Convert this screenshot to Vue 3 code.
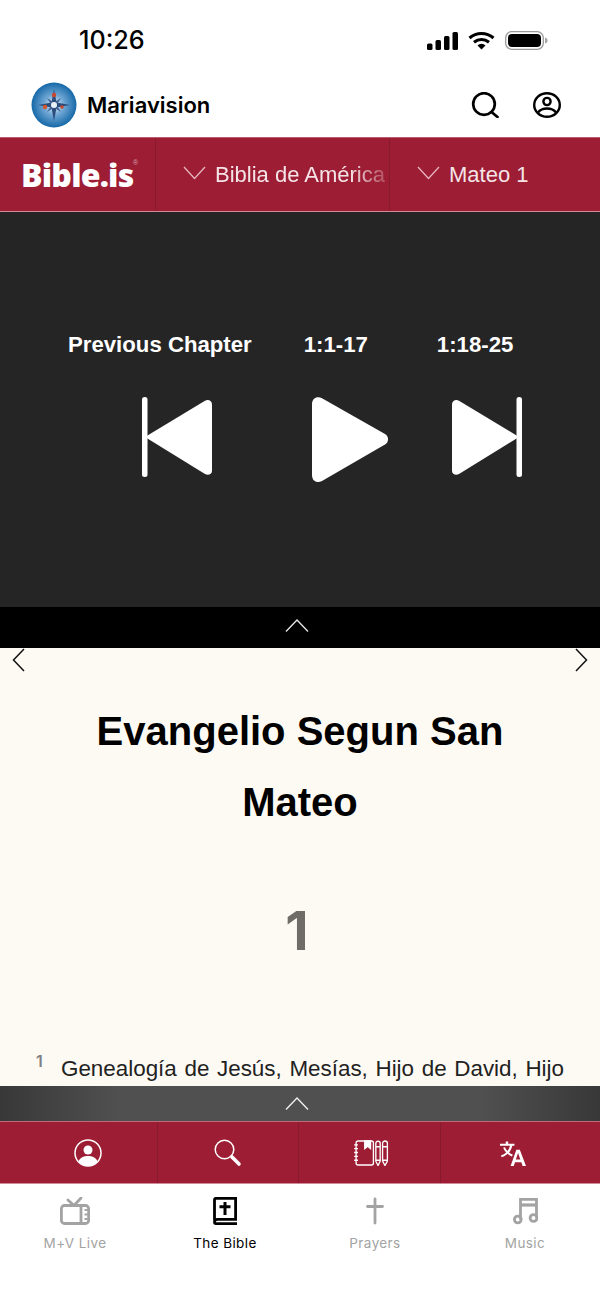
<template>
  <div class="phone">
    <div class="status-bar">
      <span class="time">10:26</span>
      <div class="status-icons">
        <svg width="31" height="18" viewBox="0 0 31 18" fill="#000"><rect x="0" y="11.500" width="5.500" height="6.500" rx="1.500"/><rect x="8.500" y="8" width="5.500" height="10" rx="1.500"/><rect x="17" y="4" width="5.500" height="14" rx="1.500"/><rect x="25.500" y="0" width="5.500" height="18" rx="1.500"/></svg>
        <svg width="27" height="19" viewBox="0 0 27 19" fill="none" stroke="#000" stroke-width="3.200"><path d="M1.500 7C8.500 1 18.500 1 25.500 7"/><path d="M6 11.200C10.500 7.800 16.500 7.800 21 11.200"/><path d="M13.500 18.500 9.500 14.500a5.700 5.700 0 0 1 8 0Z" fill="#000" stroke="none"/></svg>
        <svg width="43" height="19" viewBox="0 0 43 19"><rect x="0.700" y="0.700" width="37.600" height="17.600" rx="6" fill="none" stroke="#9a9a9a" stroke-width="1.300"/><rect x="3" y="3" width="33" height="13" rx="4" fill="#000"/><path d="M40 6.500c1.800.5 2.600 1.500 2.600 3s-.8 2.500-2.600 3Z" fill="#a5a5a5"/></svg>
      </div>
    </div>

    <header class="app-header">
      <div class="brand">
        <svg class="logo" width="46" height="46" viewBox="0 0 46 46">
          <defs>
            <radialGradient id="globe">
              <stop offset="0" stop-color="#e8f1f8"/>
              <stop offset="0.45" stop-color="#6fa6d4"/>
              <stop offset="1" stop-color="#1568a8"/>
            </radialGradient>
          </defs>
          <circle cx="23" cy="23" r="22.500" fill="url(#globe)"/>
          <path d="M23 7l2.500 13.500L39 23l-13.500 2.500L23 39l-2.500-13.500L7 23l13.500-2.500Z" fill="#2c4d7c"/>
          <path d="M16 16l7 4.500 7-4.500-4.500 7 4.500 7-7-4.500-7 4.500 4.500-7Z" fill="#3d5f90"/>
          <circle cx="23" cy="13" r="2.200" fill="#c9482f"/>
          <circle cx="14" cy="25" r="2.200" fill="#d2592f"/>
          <circle cx="31" cy="25" r="1.800" fill="#c9482f"/>
          <circle cx="23" cy="23" r="3" fill="#e9f0f7"/>
        </svg>
        <span class="brand-name">Mariavision</span>
      </div>
      <div class="header-actions">
        <svg width="28" height="26" viewBox="0 0 28 26" fill="none" stroke="#000" stroke-width="2.700" stroke-linecap="round"><circle cx="13" cy="12" r="10.800"/><path d="M20.500 20l6 5"/></svg>
        <svg width="28" height="26" viewBox="0 0 28 26" fill="none" stroke="#000" stroke-width="2.400"><ellipse cx="14" cy="13" rx="12.800" ry="11.800"/><circle cx="14" cy="9.500" r="3.600"/><path d="M5 20.500c2-2.800 5-4 9-4s7 1.200 9 4"/></svg>
      </div>
    </header>

    <nav class="bible-bar">
      <div class="bar-cell logo-cell">
        <span class="bible-logo">Bible.is</span>
        <span class="reg">®</span>
      </div>
      <div class="bar-cell version-cell">
        <svg class="chev" width="23" height="14" viewBox="0 0 23 14" fill="none" stroke="#e7b5be" stroke-width="1.300"><path d="M1 1l10.500 11.500L22 1"/></svg>
        <span class="bar-text fade">Biblia de América</span>
      </div>
      <div class="bar-cell chapter-cell">
        <svg class="chev" width="23" height="14" viewBox="0 0 23 14" fill="none" stroke="#e7b5be" stroke-width="1.300"><path d="M1 1l10.500 11.500L22 1"/></svg>
        <span class="bar-text">Mateo 1</span>
      </div>
    </nav>

    <section class="player">
      <div class="labels">
        <span class="label-prev">Previous Chapter</span>
        <span class="label-a">1:1-17</span>
        <span class="label-b">1:18-25</span>
      </div>
      <div class="controls">
        <svg class="ctl-prev" width="70" height="80" viewBox="0 0 70 80" fill="#fff"><rect x="0" y="0" width="5.500" height="80" rx="2.500"/><path d="M3 40 63 3.800c3-1.800 7-.3 7 3.600v66c0 4-4 5.400-7 3.600Z"/></svg>
        <svg class="ctl-play" width="76" height="86" viewBox="0 0 76 86" fill="#fff"><path d="M0 7C0 1.500 5-1.500 10 1.200L73 37c4 2.500 4 8 0 10.500L10 84c-5 2.800-10 0-10-6Z"/></svg>
        <svg class="ctl-next" width="70" height="80" viewBox="0 0 70 80" fill="#fff"><rect x="64.500" y="0" width="5.500" height="80" rx="2.500"/><path d="M67 40 7 3.800C4 2 0 3.500 0 7.400v66c0 4 4 5.400 7 3.600Z"/></svg>
      </div>
    </section>

    <div class="collapse-bar">
      <svg width="24" height="13" viewBox="0 0 24 13" fill="none" stroke="#e8e8e8" stroke-width="1.300"><path d="M1 12.500 12 1l11 11.500"/></svg>
    </div>

    <main class="reader">
      <svg class="page-arrow left" width="13" height="24" viewBox="0 0 13 24" fill="none" stroke="#111" stroke-width="1.500"><path d="M12 1 1.500 12 12 23"/></svg>
      <svg class="page-arrow right" width="13" height="24" viewBox="0 0 13 24" fill="none" stroke="#111" stroke-width="1.500"><path d="M1 1l10.500 11L1 23"/></svg>
      <h1 class="book-title">Evangelio Segun San Mateo</h1>
      <div class="chapter-num">1</div>
      <p class="verse"><sup class="verse-num">1</sup><span class="verse-text">Genealogía de Jesús, Mesías, Hijo de David, Hijo</span></p>
    </main>

    <div class="expand-bar">
      <svg width="24" height="13" viewBox="0 0 24 13" fill="none" stroke="#f2f2f2" stroke-width="1.300"><path d="M1 12.500 12 1l11 11.500"/></svg>
    </div>

    <div class="tool-bar">
      <div class="tool first">
        <svg width="28" height="28" viewBox="0 0 28 28" fill="#fff"><circle cx="14" cy="14" r="13" fill="none" stroke="#fff" stroke-width="1.500"/><circle cx="14" cy="11" r="4.500"/><path d="M4.500 22.500C6 18.500 9.500 17 14 17s8 1.500 9.500 5.500A13 13 0 0 1 14 27a13 13 0 0 1-9.500-4.500Z"/></svg>
      </div>
      <div class="tool">
        <svg width="28" height="28" viewBox="0 0 28 28" fill="none" stroke="#fff"><circle cx="10.500" cy="10.500" r="9.300" stroke-width="1.500"/><path d="M18 18l7 7" stroke-width="3.600" stroke-linecap="round"/></svg>
      </div>
      <div class="tool third">
        <svg width="35" height="26" viewBox="0 0 36 27" fill="none" stroke="#fff" stroke-width="1.400"><rect x="2" y="1" width="18" height="25" rx="2"/><path d="M0 5h4M0 9h4M0 13h4M0 17h4M0 21h4"/><path d="M11 1h6v8l-3-2.500L11 9Z" fill="#fff"/><path d="M22.500 3.500a2.200 2.200 0 0 1 4.500 0V22l-2.200 4.500L22.500 22ZM29.500 3.500a2.400 2.400 0 0 1 5 0V22l-2.500 4.500L29.500 22Z"/><path d="M22.500 7h4.500M29.500 7h5M22.500 21h4.500M29.500 21h5"/></svg>
      </div>
      <div class="tool last">
        <svg width="27" height="26" viewBox="0 0 28 27" fill="#fff"><path d="M7 1.500h2.500V4H16v2h-2.200c-.7 3-2 5.300-3.400 7 1.200.9 2.500 1.600 4 2.200l-1 1.900c-1.700-.7-3.100-1.600-4.500-2.700C7.300 15.800 5.300 17 2.800 18L2 16.200c2.200-.8 4-1.900 5.400-3.200C6 11.500 5 9.800 4.300 8l1.900-.5c.6 1.500 1.400 2.900 2.600 4 1.100-1.400 2-3.200 2.600-5.500H1V4h6Z"/><path d="M18 10h3.600L28 27h-3.500l-1.300-3.800h-6.600L15.300 27H12Zm1.800 3.500-2.300 6.800h4.600Z"/></svg>
      </div>
    </div>

    <footer class="tab-bar">
      <div class="tab">
        <svg width="30" height="28" viewBox="0 0 30 28" fill="none" stroke="#a3a3a3" stroke-width="2.800" stroke-linejoin="round"><rect x="1.400" y="8.500" width="27.200" height="18" rx="3"/><path d="M8 3l6 5.500L21 1" stroke-linecap="round"/><path d="M21 8.500v18"/><path d="M24.500 13h3M24.500 17.500h3M24.500 22h3" stroke-width="2"/></svg>
        <span>M+V Live</span>
      </div>
      <div class="tab active">
        <svg width="24" height="28" viewBox="0 0 24 28" fill="none" stroke="#000" stroke-width="2.800"><path d="M1.500 23.500V3A1.600 1.600 0 0 1 3 1.400h19.600v21H4.500A3 3 0 0 0 1.500 25 1.600 1.600 0 0 0 3 26.600h21"/><path d="M12 5v13M6.500 9.800h11" stroke-width="3"/></svg>
        <span>The Bible</span>
      </div>
      <div class="tab">
        <svg width="18" height="27" viewBox="0 0 18 27" fill="none" stroke="#a3a3a3" stroke-width="2.800" stroke-linecap="round"><path d="M9 1.500v24M1.500 9h15"/></svg>
        <span>Prayers</span>
      </div>
      <div class="tab">
        <svg width="25" height="27" viewBox="0 0 25 27" fill="none" stroke="#a3a3a3" stroke-width="2.800"><path d="M7.500 22V1.900h16V20"/><path d="M7.500 7.500h16" stroke-width="3.200"/><circle cx="4.800" cy="22" r="3.400"/><circle cx="20.500" cy="20.500" r="3.400"/></svg>
        <span>Music</span>
      </div>
    </footer>
  </div>
</template>

<script setup>
</script>

<style>
html, body { margin: 0; background: #fff; }
</style>

<style scoped>
.phone {
  width: 600px; height: 1300px; display: flex; flex-direction: column;
  overflow: hidden; background: #fff; font-family: "Liberation Sans", Arial, sans-serif;
}

.status-bar {
  height: 72px; flex: none; display: flex; align-items: flex-start; justify-content: space-between;
  padding: 27px 52px 0 79px; box-sizing: border-box;
}
.time { font-family: Inter, sans-serif; font-size: 25.200px; font-weight: 500; line-height: 27px; color: #000; }
.status-icons { display: flex; gap: 10px; align-items: center; padding-top: 4px; }

.app-header {
  height: 65px; flex: none; display: flex; align-items: center; justify-content: space-between;
  padding: 0 39px 0 31px; box-sizing: border-box;
}
.brand { display: flex; align-items: center; gap: 10px; margin-top: 1px; }
.brand-name { font-family: Inter, sans-serif; font-size: 22px; font-weight: 600; color: #000; }
.header-actions { display: flex; align-items: center; gap: 34px; margin-top: 0; }

.bible-bar {
  height: 75px; flex: none; display: flex; box-sizing: border-box;
  background: #9c1d34; border-top: 1px solid #bb5a6a; border-bottom: 1px solid #cf8b96;
}
.bar-cell { display: flex; align-items: center; box-sizing: border-box; border-right: 1px solid #871a2e; }
.logo-cell { width: 156px; padding-left: 21px; position: relative; }
.version-cell { width: 234px; padding-left: 27px; gap: 9px; overflow: hidden; }
.chapter-cell { flex: 1; padding-left: 27px; gap: 9px; border-right: none; }
.bible-logo {
  font-family: "Open Sans", sans-serif; font-weight: 800; font-size: 32px; line-height: 32px; color: #fff;
  letter-spacing: -0.8px; white-space: nowrap;
}
.reg { position: absolute; top: 20px; left: 133px; font-size: 7px; line-height: 9px; color: #d9a0aa; }
.chev { flex: none; margin-top: -4px; }
.bar-text { font-size: 22px; color: #f5e4e7; white-space: nowrap; }
.fade { -webkit-mask-image: linear-gradient(to right, #000 80%, rgba(0,0,0,0.25) 100%); mask-image: linear-gradient(to right, #000 80%, rgba(0,0,0,0.25) 100%); }

.player { height: 395px; flex: none; background: #252525; box-sizing: border-box; padding-top: 120px; }
.labels { display: flex; padding-left: 68px; color: #fff; font-size: 22.200px; font-weight: 700; line-height: 26px; white-space: nowrap; }
.label-a { margin-left: 52px; }
.label-b { margin-left: 69px; }
.controls { display: flex; align-items: flex-start; padding-left: 142px; margin-top: 39px; }
.ctl-play { margin-left: 100px; }
.ctl-next { margin-left: 64px; }

.collapse-bar {
  height: 41px; flex: none; background: #000; display: flex; justify-content: center; align-items: flex-start;
  padding: 12px 6px 0 0; box-sizing: border-box;
}

.reader { height: 438px; flex: none; background: #fdfaf4; box-sizing: border-box; position: relative; overflow: hidden; padding-top: 48px; }
.page-arrow { position: absolute; top: 0; }
.page-arrow.left { left: 12px; }
.page-arrow.right { right: 12px; }
.book-title { margin: 0; padding: 0 60px; text-align: center; font-size: 40px; font-weight: 700; line-height: 71px; color: #000; }
.chapter-num { margin-top: 58px; padding-right: 6px; text-align: center; font-family: Inter, sans-serif; font-size: 54px; font-weight: 700; line-height: 70px; color: #6f6c68; }
.verse { margin: 88px 36px 0 36px; display: flex; align-items: flex-start; font-size: 22.400px; line-height: 30px; color: #222; }
.verse-num { flex: none; width: 25px; font-family: Inter, sans-serif; font-size: 16px; font-weight: 600; line-height: 18px; color: #808080; margin-top: -2px; }
.verse-text { flex: 1; text-align: justify; text-align-last: justify; }

.expand-bar {
  height: 35px; flex: none; display: flex; justify-content: center; align-items: flex-start; padding: 11px 6px 0 0; box-sizing: border-box;
  background: linear-gradient(to right, #383838, #505050 20%, #505050 80%, #383838);
}

.tool-bar {
  height: 63px; flex: none; display: grid; grid-template-columns: 158px 141px 142px 159px; box-sizing: border-box;
  background: #9c1d34; border-top: 1px solid #c06a78; border-bottom: 1px solid #cf8b96;
}
.tool { display: flex; align-items: center; justify-content: center; border-right: 1px solid #871a2e; }
.tool.first { padding-left: 18px; }
.tool.third { padding-left: 4px; }
.tool.last { padding-right: 16px; border-right: none; }

.tab-bar { flex: 1; display: grid; grid-template-columns: repeat(4, 150px); align-items: start; padding-top: 13px; }
.tab { display: flex; flex-direction: column; align-items: center; color: #a3a3a3; }
.tab svg { height: 28px; }
.tab span { margin-top: 8px; font-family: Inter, sans-serif; font-size: 13.500px; line-height: 20px; letter-spacing: 0.4px; }
.tab.active { color: #000; }
</style>
